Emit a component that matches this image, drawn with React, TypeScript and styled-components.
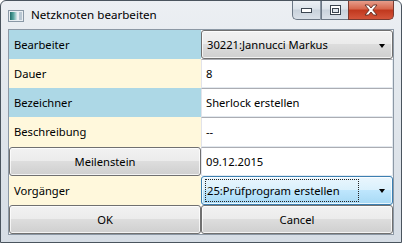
import React from "react";
import styled, { createGlobalStyle, css } from "styled-components";

const GlobalStyle = createGlobalStyle`
  html, body { margin: 0; padding: 0; overflow: hidden; background: #ffffff; }
  * { box-sizing: border-box; }
`;

const FONT = `"Segoe UI", "Noto Sans", "Open Sans", sans-serif`;
const FS = "11.2px";

const Window = styled.div`
  width: 402px;
  height: 243px;
  display: flex;
  flex-direction: column;
  border: 1px solid #4a545e;
  border-radius: 6px 6px 0 0;
  background: linear-gradient(180deg, #eceff3 0%, #e4e9ee 30%, #d6dde5 100%);
  font-family: ${FONT};
  overflow: hidden;
`;

const TitleBar = styled.div`
  height: 28px;
  display: flex;
  align-items: flex-start;
  padding-left: 7px;
  flex-shrink: 0;
`;

const TitleText = styled.span`
  margin-top: 6px;
  margin-left: 7px;
  font-size: 11.6px;
  color: #000;
  white-space: nowrap;
`;

const IconBox = styled.div`
  margin-top: 7px;
  width: 16px;
  height: 16px;
  display: flex;
`;

const Spacer = styled.div`
  flex: 1;
`;

const CaptionGroup = styled.div`
  display: flex;
  margin-top: -1px;
  margin-right: 7px;
  height: 20px;
`;

const CaptionButton = styled.div<{ $kind: "min" | "max" | "close" }>`
  display: flex;
  align-items: center;
  justify-content: center;
  border: 1px solid #6b7785;
  border-top: none;
  ${(p) =>
    p.$kind === "close"
      ? css`
          width: 46px;
          border-radius: 0 0 5px 0;
          border-color: #7a3a30;
          background: linear-gradient(180deg, #e8a493 0%, #d7694f 45%, #c1391f 55%, #d4553b 100%);
        `
      : css`
          width: ${p.$kind === "min" ? 29 : 27}px;
          border-right: ${p.$kind === "min" ? "1px solid #8a96a3" : "none"};
          border-radius: ${p.$kind === "min" ? "0 0 0 5px" : "0"};
          background: linear-gradient(180deg, #eef2f6 0%, #dde4eb 45%, #c9d2dc 55%, #d9e0e8 100%);
        `}
`;

const Client = styled.div`
  flex: 1;
  margin: 0 7px 7px 7px;
  border: 1px solid #8c98a5;
  background: #ffffff;
  display: grid;
  grid-template-columns: 1fr 1fr;
  grid-template-rows: repeat(7, 1fr);
`;

const Label = styled.div<{ $bg: "blue" | "silk" }>`
  display: flex;
  align-items: center;
  padding-left: 5px;
  font-size: ${FS};
  color: #000;
  background: ${(p) => (p.$bg === "blue" ? "#add8e6" : "#fff8dc")};
`;

const TextBox = styled.div`
  display: flex;
  align-items: center;
  padding-left: 4px;
  font-size: ${FS};
  color: #000;
  background: #fff;
  border: 1px solid #e3e9ef;
  border-top-color: #abadb3;
  border-left-color: #e2e3ea;
`;

const buttonLook = css<{ $hot?: boolean }>`
  border-radius: 3px;
  ${(p) =>
    p.$hot
      ? css`
          border: 1px solid #3c7fb1;
          background: linear-gradient(180deg, #eaf6fd 0%, #d9f0fc 50%, #bee6fd 50%, #a7d9f5 100%);
        `
      : css`
          border: 1px solid #707070;
          background: linear-gradient(180deg, #f2f2f2 0%, #ebebeb 50%, #dddddd 50%, #cfcfcf 100%);
        `}
  box-shadow: inset 0 0 0 1px rgba(255, 255, 255, 0.75);
`;

const Button = styled.div<{ $hot?: boolean }>`
  ${buttonLook};
  display: flex;
  align-items: center;
  justify-content: center;
  font-size: ${FS};
  color: #000;
`;

const Combo = styled.div<{ $hot?: boolean }>`
  ${buttonLook};
  display: flex;
  align-items: center;
  padding: 2px 7px 2px 3px;
  font-size: ${FS};
  color: #000;
`;

const ComboText = styled.div<{ $focus?: boolean }>`
  flex: 1;
  align-self: stretch;
  display: flex;
  align-items: center;
  padding-left: 1px;
  border: 1px dotted ${(p) => (p.$focus ? "#222" : "transparent")};
  margin-right: 20px;
`;

const Arrow = styled.div`
  width: 0;
  height: 0;
  border-left: 3.5px solid transparent;
  border-right: 3.5px solid transparent;
  border-top: 4px solid #000;
  margin-top: 2px;
`;

function AppIcon() {
  return (
    <svg width="16" height="16" viewBox="0 0 16 16">
      <defs>
        <linearGradient id="ig" x1="0" y1="0" x2="1" y2="0">
          <stop offset="0" stopColor="#1f6d6a" />
          <stop offset="0.5" stopColor="#59a6a0" />
          <stop offset="1" stopColor="#d8e6ea" />
        </linearGradient>
      </defs>
      <rect x="0.5" y="2.5" width="15" height="11" fill="#e9eef2" stroke="#8a98a6" />
      <rect x="2" y="4" width="7" height="8" fill="url(#ig)" />
      <rect x="11" y="4" width="3" height="8" fill="#b9c7d3" />
    </svg>
  );
}

function MinIcon() {
  return (
    <svg width="11" height="6" viewBox="0 0 11 6">
      <rect x="0.5" y="1.5" width="10" height="4" fill="#fff" stroke="#3b4550" />
    </svg>
  );
}

function MaxIcon() {
  return (
    <svg width="11" height="10" viewBox="0 0 11 10">
      <rect x="0.5" y="0.5" width="10" height="9" fill="#fff" stroke="#3b4550" />
      <rect x="2.5" y="3.5" width="6" height="4" fill="#dfe5ec" stroke="#3b4550" />
    </svg>
  );
}

function CloseIcon() {
  return (
    <svg width="14" height="12" viewBox="0 0 14 12">
      <path
        d="M1 1 L4.5 1 L7 4 L9.5 1 L13 1 L8.8 6 L13 11 L9.5 11 L7 8 L4.5 11 L1 11 L5.2 6 Z"
        fill="#fff"
        stroke="#5b2a22"
        strokeWidth="0.9"
        strokeLinejoin="round"
      />
    </svg>
  );
}

export default function App() {
  return (
    <>
      <GlobalStyle />
      <Window>
        <TitleBar>
          <IconBox>
            <AppIcon />
          </IconBox>
          <TitleText>Netzknoten bearbeiten</TitleText>
          <Spacer />
          <CaptionGroup>
            <CaptionButton $kind="min">
              <MinIcon />
            </CaptionButton>
            <CaptionButton $kind="max">
              <MaxIcon />
            </CaptionButton>
            <CaptionButton $kind="close">
              <CloseIcon />
            </CaptionButton>
          </CaptionGroup>
        </TitleBar>
        <Client>
          <Label $bg="blue">Bearbeiter</Label>
          <Combo>
            <ComboText>30221:Jannucci Markus</ComboText>
            <Arrow />
          </Combo>
          <Label $bg="silk">Dauer</Label>
          <TextBox>8</TextBox>
          <Label $bg="blue">Bezeichner</Label>
          <TextBox>Sherlock erstellen</TextBox>
          <Label $bg="silk">Beschreibung</Label>
          <TextBox>--</TextBox>
          <Button>Meilenstein</Button>
          <TextBox>09.12.2015</TextBox>
          <Label $bg="silk">Vorgänger</Label>
          <Combo $hot>
            <ComboText $focus>25:Prüfprogram erstellen</ComboText>
            <Arrow />
          </Combo>
          <Button>OK</Button>
          <Button>Cancel</Button>
        </Client>
      </Window>
    </>
  );
}
